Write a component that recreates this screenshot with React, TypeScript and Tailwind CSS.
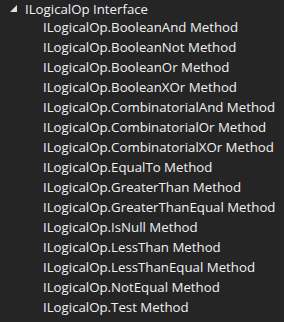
import React from "react";

const items = [
  "BooleanAnd",
  "BooleanNot",
  "BooleanOr",
  "BooleanXOr",
  "CombinatorialAnd",
  "CombinatorialOr",
  "CombinatorialXOr",
  "EqualTo",
  "GreaterThan",
  "GreaterThanEqual",
  "IsNull",
  "LessThan",
  "LessThanEqual",
  "NotEqual",
  "Test",
];

export default function App() {
  return (
    <div
      className="w-[284px] h-[322px] bg-[#252526] text-[#f1f1f1] overflow-hidden text-[13.25px] leading-[18px]"
      style={{ fontFamily: '"Open Sans", "Noto Sans", sans-serif' }}
    >
      <div className="flex flex-col">
        <div className="flex items-center h-[17px]">
          <div className="w-[25px] flex justify-center pl-[1px]">
            <svg width="7" height="7" viewBox="0 0 7 7">
              <polygon points="7,0 7,7 0,7" fill="#e0e0e0" />
            </svg>
          </div>
          <span>ILogicalOp Interface</span>
        </div>
        {items.map((m) => (
          <div key={m} className="flex items-center h-[20px] pl-[43px] whitespace-nowrap">
            ILogicalOp.{m} Method
          </div>
        ))}
      </div>
    </div>
  );
}
